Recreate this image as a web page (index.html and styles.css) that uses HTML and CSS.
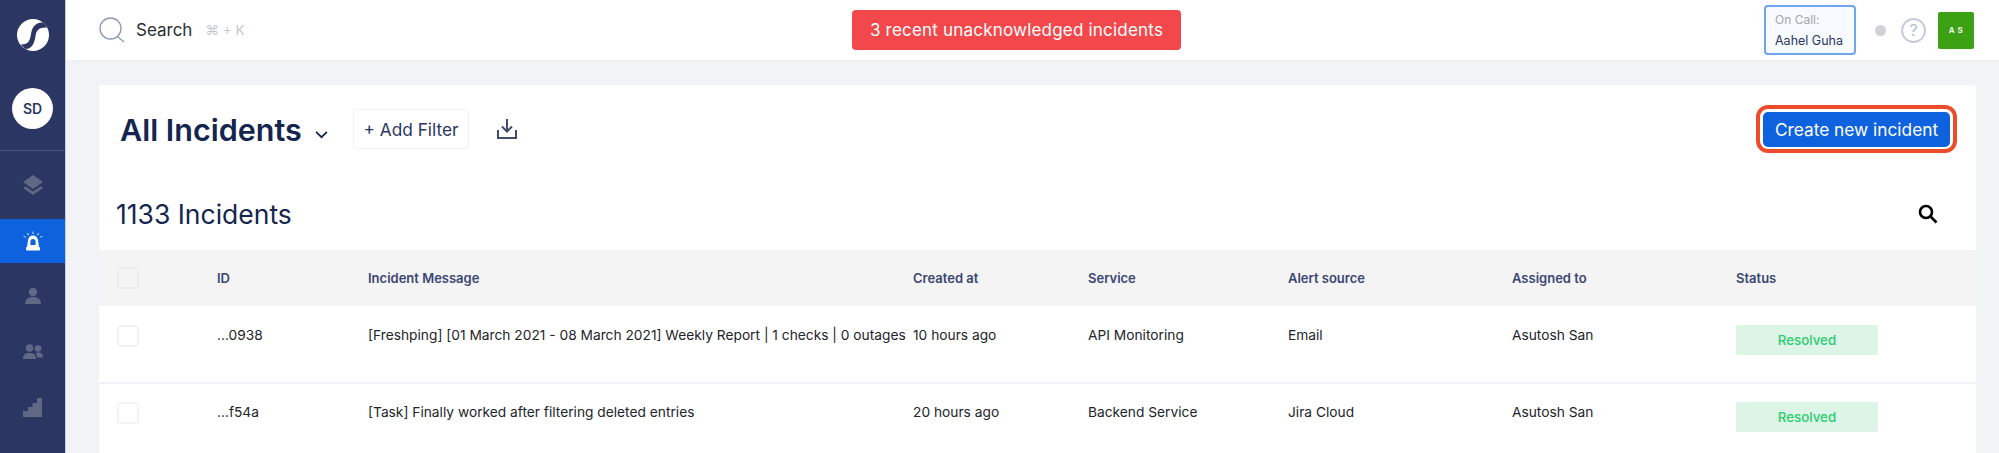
FILE: index.html
```html
<!DOCTYPE html>
<html lang="en">
<head>
    <meta charset="UTF-8">
    <title>All Incidents</title>
    <link rel="stylesheet" href="styles.css">
</head>
<body>
<div class="app">
    <nav class="sidebar">
        <div class="logo-wrap">
            <svg class="logo" viewBox="0 0 32 32">
                <circle cx="16" cy="16" r="16" fill="#fff"/>
                <path d="M26 3.500 C18 3 15 9 14 15 C13 22 11 26 3.500 25.500 C5 27 6.500 28.500 8.500 30 C15 30 17.500 24 18.500 17 C19.500 11 22 8 30 8.500 C29 6.500 27.500 5 26 3.500 Z" fill="#2b3663"/>
            </svg>
        </div>
        <div class="org-wrap"><span class="org">SD</span></div>
        <a class="nav-item layers">
            <svg viewBox="0 0 20 20" class="nav-icon"><path d="M10 0 L20 7 L10 14 L0 7 Z"/><path d="M2.500 11.500 L10 16.500 L17.500 11.500 L20 13 L10 20 L0 13 Z"/></svg>
        </a>
        <a class="nav-item active">
            <svg viewBox="0 0 20 20" class="nav-icon"><path d="M4 16 L5 9 C5.400 6.300 7.500 4.500 10 4.500 C12.500 4.500 14.600 6.300 15 9 L16 16 Z M10 8 A2.600 2.600 0 0 0 7.400 10.600 L7.400 14 L12.600 14 L12.600 10.600 A2.600 2.600 0 0 0 10 8 Z" fill-rule="evenodd"/><rect x="3" y="16" width="14" height="3.500" rx="0.800"/><path d="M9.600 0.500 H10.400 V3 H9.600 Z M4.500 2 L6 3.800 L5.400 4.400 L3.900 2.600 Z M15.500 2 L16.100 2.600 L14.600 4.400 L14 3.800 Z M0.500 5 L2.800 5.800 L2.600 6.500 L0.500 5.800 Z M19.500 5 L19.500 5.800 L17.400 6.500 L17.200 5.800 Z"/></svg>
        </a>
        <a class="nav-item">
            <svg viewBox="0 0 20 20" class="nav-icon"><circle cx="10" cy="6" r="4.200"/><path d="M2 18 C2.500 12.500 6 11 10 11 C14 11 17.500 12.500 18 18 Z"/></svg>
        </a>
        <a class="nav-item">
            <svg viewBox="0 0 20 20" class="nav-icon"><circle cx="6.500" cy="6" r="3.800"/><circle cx="15" cy="6.500" r="3.300"/><path d="M0 17 C0 12 2.500 11 6.500 11 C10.500 11 13 12.500 13 17 Z"/><path d="M14 15.500 C14 13.500 13.500 12 12.500 11 C16 10 20 10.500 20 15.500 Z"/></svg>
        </a>
        <a class="nav-item">
            <svg viewBox="0 0 20 20" class="nav-icon"><path d="M19 0 V19 H0 V13 H5 V9 H9.500 V5 H14 V0 Z"/></svg>
        </a>
    </nav>

    <div class="content">
        <header class="topbar">
            <div class="search-box">
                <svg class="search-icon" viewBox="0 0 26 26"><circle cx="11.500" cy="11.500" r="10.500"/><path d="M19 20 L25 25"/></svg>
                <span class="search-label">Search</span>
                <span class="search-keys">⌘ + K</span>
            </div>
            <div class="alert">3 recent unacknowledged incidents</div>
            <div class="top-right">
                <div class="oncall">
                    <div class="oncall-label">On Call:</div>
                    <div class="oncall-name">Aahel Guha</div>
                </div>
                <span class="status-dot"></span>
                <span class="help">?</span>
                <span class="avatar">A S</span>
            </div>
        </header>

        <main class="main">
            <section class="card">
                <div class="card-head">
                    <div class="title-wrap">
                        <h1 class="title">All Incidents</h1>
                        <svg class="chevron" viewBox="0 0 12 8"><path d="M1 1.500 L6 6.500 L11 1.500"/></svg>
                    </div>
                    <button class="filter-btn">+ Add Filter</button>
                    <svg class="download" viewBox="0 0 22 22"><path d="M11 1 V13 M6 8.500 L11 13.500 L16 8.500"/><path d="M2 12 V20 H20 V12"/></svg>
                    <div class="create-wrap"><button class="create-btn">Create new incident</button></div>
                </div>
                <div class="count-row">
                    <h2 class="count">1133 Incidents</h2>
                    <svg class="count-search" viewBox="0 0 20 20"><circle cx="8" cy="8" r="6"/><path d="M12.500 12.500 L18.500 18.500"/></svg>
                </div>

                <div class="row head">
                    <div class="cell-check"><span class="check"></span></div>
                    <div>ID</div>
                    <div>Incident Message</div>
                    <div>Created at</div>
                    <div>Service</div>
                    <div>Alert source</div>
                    <div>Assigned to</div>
                    <div>Status</div>
                </div>
                <div class="row body">
                    <div class="cell-check"><span class="check"></span></div>
                    <div>...0938</div>
                    <div class="message">[Freshping] [01 March 2021 - 08 March 2021] Weekly Report | 1 checks | 0 outages</div>
                    <div>10 hours ago</div>
                    <div>API Monitoring</div>
                    <div>Email</div>
                    <div>Asutosh San</div>
                    <div><span class="badge">Resolved</span></div>
                </div>
                <div class="row body">
                    <div class="cell-check"><span class="check"></span></div>
                    <div>...f54a</div>
                    <div class="message">[Task] Finally worked after filtering deleted entries</div>
                    <div>20 hours ago</div>
                    <div>Backend Service</div>
                    <div>Jira Cloud</div>
                    <div>Asutosh San</div>
                    <div><span class="badge">Resolved</span></div>
                </div>
            </section>
        </main>
    </div>
</div>
</body>
</html>
```

FILE: styles.css
```css
* {
    padding: 0;
    margin: 0;
    box-sizing: border-box;
}

html, body {
    height: 100%;
    overflow: hidden;
}

body {
    font-family: "Inter", "Liberation Sans", sans-serif;
    color: #1f2a44;
    background-color: #f2f3f6;
}

.app {
    display: flex;
    height: 453px;
}

/* sidebar */
.sidebar {
    width: 66px;
    flex-shrink: 0;
    background-color: #2b3663;
    border-right: 1px solid #c9ccd6;
    display: flex;
    flex-direction: column;
}

.logo-wrap {
    height: 70px;
    display: flex;
    align-items: center;
    justify-content: center;
}

.logo {
    width: 32px;
    height: 32px;
}

.org-wrap {
    height: 81px;
    border-bottom: 1px solid #48527a;
    display: flex;
    justify-content: center;
    padding-top: 18px;
}

.org {
    width: 41px;
    height: 41px;
    border-radius: 50%;
    background-color: #fff;
    color: #2b3663;
    font-size: 14px;
    font-weight: 600;
    display: flex;
    align-items: center;
    justify-content: center;
}

.nav-item {
    height: 56px;
    display: flex;
    align-items: center;
    justify-content: center;
}

.nav-item.layers {
    height: 68px;
}

.nav-item.active {
    height: 44px;
    margin-bottom: 5px;
    background-color: #0f62de;
}

.nav-icon {
    width: 20px;
    height: 20px;
    fill: #5f6986;
}

.active .nav-icon {
    fill: #fff;
}

/* top bar */
.content {
    flex: 1;
    min-width: 0;
    display: flex;
    flex-direction: column;
}

.topbar {
    height: 62px;
    flex-shrink: 0;
    background-color: #fff;
    border-bottom: 2px solid #eef0f4;
    display: flex;
    align-items: center;
    padding-left: 33px;
}

.search-box {
    width: 753px;
    display: flex;
    align-items: center;
}

.search-icon {
    width: 26px;
    height: 26px;
    fill: none;
    stroke: #8d9ab3;
    stroke-width: 1.300;
}

.search-label {
    font-size: 17px;
    color: #2a2d33;
    margin-left: 11px;
}

.search-keys {
    font-size: 13.500px;
    color: #c4c8d0;
    margin-left: 13px;
}

.alert {
    width: 329px;
    height: 40px;
    background-color: #f2474b;
    border-radius: 4px;
    color: #fff;
    font-size: 17px;
    letter-spacing: 0.200px;
    display: flex;
    align-items: center;
    justify-content: center;
}

.top-right {
    margin-left: auto;
    display: flex;
    align-items: center;
    padding-right: 25px;
}

.oncall {
    width: 92px;
    height: 50px;
    border: 2px solid #6ea5ec;
    border-radius: 4px;
    background-color: #f7faff;
    padding: 5px 0 0 9px;
}

.oncall-label {
    font-size: 12px;
    color: #a3a6ad;
}

.oncall-name {
    font-size: 12.500px;
    color: #2b3663;
    margin-top: 6px;
    white-space: nowrap;
}

.status-dot {
    width: 11px;
    height: 11px;
    border-radius: 50%;
    background-color: #d2d2d4;
    margin-left: 19px;
}

.help {
    width: 25px;
    height: 25px;
    border: 2px solid #c5cbd9;
    border-radius: 50%;
    margin-left: 15px;
    color: #b5bccb;
    font-size: 16px;
    display: flex;
    align-items: center;
    justify-content: center;
}

.avatar {
    width: 36px;
    height: 37px;
    margin-left: 12px;
    background-color: #3da114;
    border-radius: 2px;
    color: #fff;
    font-size: 8px;
    font-weight: 600;
    letter-spacing: 0.500px;
    display: flex;
    align-items: center;
    justify-content: center;
}

/* card */
.main {
    flex: 1;
    min-height: 0;
    padding: 23px 23px 0 33px;
}

.card {
    height: 100%;
    background-color: #fff;
    border-radius: 3px 3px 0 0;
}

.card-head {
    height: 88px;
    display: flex;
    align-items: center;
    padding-left: 21px;
}

.title-wrap {
    display: flex;
    align-items: center;
}

.title {
    width: 183px;
    font-size: 30.500px;
    font-weight: 600;
    color: #14264f;
    white-space: nowrap;
}

.chevron {
    width: 13px;
    height: 9px;
    margin: 11px 0 0 12px;
    fill: none;
    stroke: #14264f;
    stroke-width: 1.600;
}

.filter-btn {
    width: 116px;
    height: 40px;
    margin-left: 25px;
    background-color: #fff;
    border: 1px solid #f1f2f5;
    border-radius: 3px;
    color: #2b3663;
    font-family: inherit;
    font-size: 17.300px;
}

.download {
    width: 22px;
    height: 22px;
    margin-left: 27px;
    fill: none;
    stroke: #3f4c6b;
    stroke-width: 2;
}

.create-wrap {
    margin-left: auto;
    margin-right: 19px;
    border: 4px solid #ee4b2b;
    border-radius: 12px;
    padding: 2.500px 3px;
}

.create-btn {
    width: 187px;
    height: 35px;
    display: block;
    background-color: #0f62de;
    border: 0;
    border-radius: 5px;
    color: #fff;
    font-family: inherit;
    font-size: 17.300px;
}

.count-row {
    height: 77px;
    display: flex;
    align-items: center;
    justify-content: space-between;
    padding: 4px 38px 0 17px;
}

.count {
    font-size: 26.500px;
    font-weight: 400;
    color: #14264f;
}

.count-search {
    width: 20px;
    height: 20px;
    fill: none;
    stroke: #000;
    stroke-width: 2.600;
}

/* table */
.row {
    display: grid;
    grid-template-columns: 118px 151px 545px 175px 200px 224px 224px 1fr;
    font-size: 13.750px;
    line-height: 20px;
    color: #22252b;
}

.row.head {
    height: 56px;
    align-items: center;
    background-color: #f4f4f5;
    color: #3b4672;
    font-size: 13px;
    font-weight: 600;
}

.row.body {
    height: 78px;
    padding-top: 19px;
    border-bottom: 2px solid #eef1f5;
}

.row.body + .row.body {
    padding-top: 18px;
}

.message {
    white-space: nowrap;
}

.cell-check {
    padding-left: 18px;
    display: flex;
}

.check {
    width: 22px;
    height: 22px;
    border: 2px solid #f2f3f5;
    border-radius: 3px;
    background-color: #fff;
}

.head .check {
    background-color: #f4f4f5;
    border-color: #ececee;
}

.badge {
    width: 142px;
    height: 30px;
    border-radius: 2px;
    background-color: #dcf5e7;
    color: #2ecc71;
    font-size: 13.300px;
    font-weight: 500;
    display: flex;
    align-items: center;
    justify-content: center;
}
```
